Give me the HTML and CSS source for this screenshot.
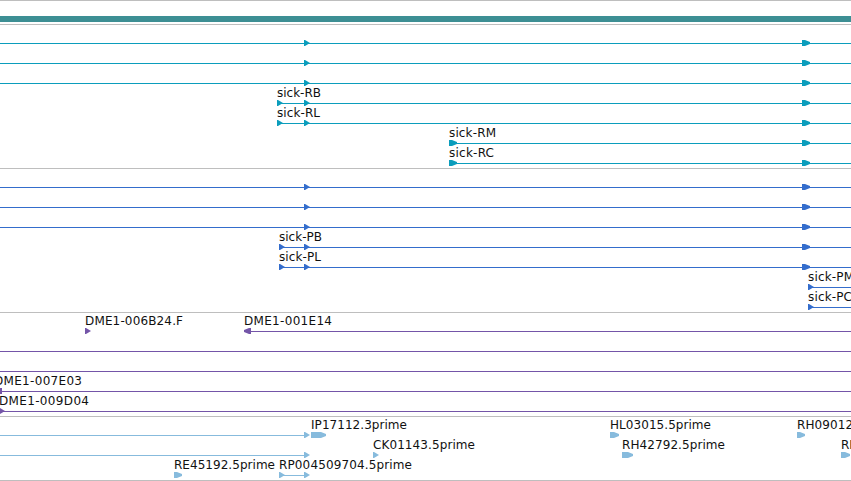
FILE: index.html
```html
<!DOCTYPE html>
<html lang="en">
<head>
<meta charset="utf-8">
<title>Genome browser</title>
<link rel="stylesheet" href="styles.css">
</head>
<body>
<svg class="defs" width="0" height="0">
  <defs>
    <path id="tip" d="M0 0H1L6 3L1 6H0Z"/>
    <path id="exon" d="M0 0H3L8 2V4L3 6H0Z"/>
  </defs>
</svg>
<main class="browser">
  <section class="track gene"><div class="gene-bar"></div></section>

  <section class="track transcripts">
    <svg class="row"><path class="line" d="M0 17.5H851"/><use href="#tip" x="304" y="14"/><use href="#exon" x="802" y="14"/></svg>
    <svg class="row"><path class="line" d="M0 17.5H851"/><use href="#tip" x="304" y="14"/><use href="#exon" x="802" y="14"/></svg>
    <svg class="row"><path class="line" d="M0 17.5H851"/><use href="#tip" x="304" y="14"/><use href="#exon" x="802" y="14"/></svg>
    <svg class="row"><text x="277" y="11" textLength="44">sick-RB</text><path class="line" d="M277 17.5H851"/><use href="#tip" x="277" y="14"/><use href="#tip" x="304" y="14"/><use href="#exon" x="802" y="14"/></svg>
    <svg class="row"><text x="277" y="11" textLength="43">sick-RL</text><path class="line" d="M277 17.5H851"/><use href="#tip" x="277" y="14"/><use href="#tip" x="304" y="14"/><use href="#exon" x="802" y="14"/></svg>
    <svg class="row"><text x="449" y="11" textLength="47">sick-RM</text><path class="line" d="M449 17.5H851"/><use href="#exon" x="449" y="14"/><use href="#exon" x="802" y="14"/></svg>
    <svg class="row"><text x="449" y="11" textLength="45">sick-RC</text><path class="line" d="M449 17.5H851"/><use href="#exon" x="449" y="14"/><use href="#exon" x="802" y="14"/></svg>
  </section>

  <section class="track proteins">
    <svg class="row"><path class="line" d="M0 17.5H851"/><use href="#tip" x="304" y="14"/><use href="#exon" x="802" y="14"/></svg>
    <svg class="row"><path class="line" d="M0 17.5H851"/><use href="#tip" x="304" y="14"/><use href="#exon" x="802" y="14"/></svg>
    <svg class="row"><path class="line" d="M0 17.5H851"/><use href="#tip" x="304" y="14"/><use href="#exon" x="802" y="14"/></svg>
    <svg class="row"><text x="279" y="11" textLength="43">sick-PB</text><path class="line" d="M279 17.5H851"/><use href="#tip" x="279" y="14"/><use href="#tip" x="304" y="14"/><use href="#exon" x="802" y="14"/></svg>
    <svg class="row"><text x="279" y="11" textLength="42">sick-PL</text><path class="line" d="M279 17.5H851"/><use href="#tip" x="279" y="14"/><use href="#tip" x="304" y="14"/><use href="#exon" x="802" y="14"/></svg>
    <svg class="row"><text x="808" y="11" textLength="46">sick-PM</text><path class="line" d="M808 17.5H851"/><use href="#tip" x="808" y="14"/></svg>
    <svg class="row"><text x="808" y="11" textLength="44">sick-PC</text><path class="line" d="M808 17.5H851"/><use href="#tip" x="808" y="14"/></svg>
  </section>

  <section class="track clones">
    <svg class="row"><text x="85" y="11" textLength="98">DME1-006B24.F</text><use href="#tip" x="85" y="14"/><text x="244" y="11" textLength="88">DME1-001E14</text><path class="line" d="M244 17.5H851"/><path d="M251 14H249L244 16V18L249 20H251Z"/></svg>
    <svg class="row"><path class="line" d="M0 17.5H851"/></svg>
    <svg class="row"><path class="line" d="M0 17.5H851"/></svg>
    <svg class="row"><text x="-6" y="11" textLength="88">DME1-007E03</text><path class="line" d="M0 17.5H851"/><path d="M0 14H2V20H0Z"/></svg>
    <svg class="row"><text x="-1" y="11" textLength="90">DME1-009D04</text><path class="line" d="M0 17.5H851"/><use href="#tip" x="-1" y="14"/></svg>
  </section>

  <section class="track ests">
    <svg class="row"><path class="line" d="M0 17.5H304"/><use href="#tip" x="304" y="14"/><text x="311" y="11" textLength="96">IP17112.3prime</text><path d="M311 14H321L326 16V18L321 20H311Z"/><text x="610" y="11" textLength="101">HL03015.5prime</text><path d="M610 14H614L619 16V18L614 20H610Z"/><text x="797" y="11" textLength="103">RH09012.5prime</text><use href="#exon" x="797" y="14"/></svg>
    <svg class="row"><path class="line" d="M0 17.5H304"/><use href="#tip" x="304" y="14"/><text x="373" y="11" textLength="102">CK01143.5prime</text><use href="#tip" x="373" y="14"/><text x="622" y="11" textLength="103">RH42792.5prime</text><path d="M622 14H628L633 16V18L628 20H622Z"/><text x="841" y="11">RH</text><path d="M841 14H845L850 16V18L845 20H841Z"/></svg>
    <svg class="row"><text x="174" y="11" textLength="101">RE45192.5prime</text><use href="#exon" x="174" y="14"/><text x="279" y="11" textLength="133">RP004509704.5prime</text><path class="line" d="M279 17.5H304"/><use href="#tip" x="279" y="14"/><use href="#tip" x="304" y="14"/></svg>
  </section>
</main>
</body>
</html>
```

FILE: styles.css
```css
body {
  margin: 0;
  background: #fff;
}

.defs {
  display: block;
}

.browser {
  width: 851px;
  height: 481px;
  box-sizing: border-box;
  overflow: hidden;
  border-bottom: 1px solid #bebebe;
}

.track {
  border-top: 1px solid #bebebe;
  padding: 1px 0 2px;
}

.gene {
  padding: 15px 0 2px;
}

.gene-bar {
  height: 6px;
  background: #3d8f94;
}

.row {
  display: block;
  width: 851px;
  height: 20px;
  fill: currentColor;
  font: 12px "DejaVu Sans", sans-serif;
}

.row text {
  fill: #111;
}

.line {
  stroke: currentColor;
  stroke-width: 1;
}

.transcripts {
  color: #0b9dbc;
}

.proteins {
  color: #346dcc;
}

.clones {
  color: #7455a8;
}

.ests {
  color: #87bbdd;
}
```
